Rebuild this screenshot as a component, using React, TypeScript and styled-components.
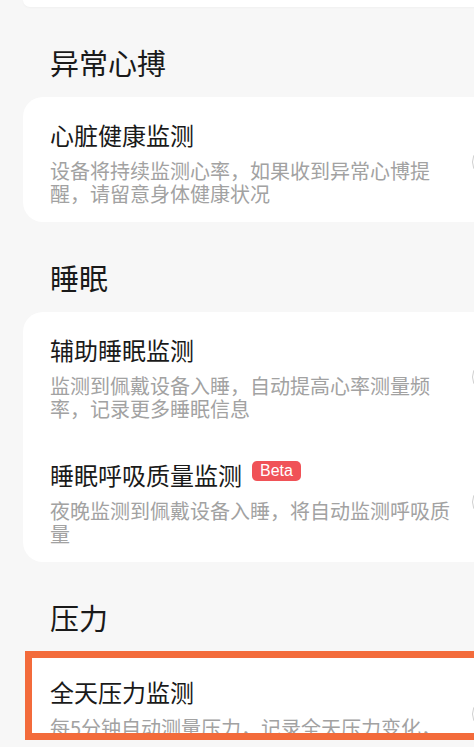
import React from "react";
import styled, { createGlobalStyle } from "styled-components";

const GlobalStyle = createGlobalStyle`
  html, body {
    margin: 0;
    padding: 0;
    background: #f7f7f7;
  }
  body {
    font-family: "Noto Sans CJK SC", "Noto Sans", sans-serif;
    color: #1c1c1c;
  }
`;

const Page = styled.div`
  width: 100%;
  min-height: 100vh;
  overflow: hidden;
`;

const CARD_WIDTH = 528;

const CardTail = styled.div`
  width: ${CARD_WIDTH}px;
  height: 7px;
  margin-left: 23px;
  background: #ffffff;
  border-radius: 0 0 20px 20px;
  box-shadow: 0 1px 2px rgba(0, 0, 0, 0.03);
`;

const SectionTitle = styled.h2`
  margin: 0;
  padding: 34.5px 0 15.5px 50px;
  font-size: 29px;
  line-height: 40px;
  font-weight: 400;
  color: #1a1a1a;
`;

const Card = styled.div`
  width: ${CARD_WIDTH}px;
  margin-left: 23px;
  background: #ffffff;
  border-radius: 20px;
  display: flex;
  flex-direction: column;
`;

const HighlightCard = styled.div`
  box-sizing: border-box;
  width: ${CARD_WIDTH}px;
  height: 89px;
  margin-left: 25px;
  margin-top: -1px;
  border: 7px solid #f36b3b;
  background: #ffffff;
  overflow: hidden;
`;

const Row = styled.div<{ $inset?: boolean }>`
  display: flex;
  align-items: ${(p) => (p.$inset ? "flex-start" : "center")};
  gap: 17px;
  padding: ${(p) => (p.$inset ? "18px 0 0 18px" : "22px 0 17px 27px")};
  min-height: ${(p) => (p.$inset ? "0" : "125px")};
  box-sizing: border-box;
`;

const TextBlock = styled.div`
  width: 405px;
  flex-shrink: 0;
`;

const TitleLine = styled.div`
  display: flex;
  align-items: center;
  gap: 10px;
`;

const ItemTitle = styled.div`
  font-size: 24px;
  line-height: 32px;
  color: #1a1a1a;
`;

const Badge = styled.span`
  display: inline-flex;
  align-items: center;
  height: 20px;
  padding: 0 8px;
  margin-bottom: 8px;
  border-radius: 5px;
  background: #f05257;
  color: #ffffff;
  font-family: "Liberation Sans", Arial, sans-serif;
  font-size: 16px;
`;

const Desc = styled.div`
  margin-top: 8px;
  font-size: 20px;
  line-height: 23px;
  color: #a2a2a2;
`;

const Switch = styled.div<{ $inset?: boolean }>`
  flex-shrink: 0;
  width: 52px;
  height: 32px;
  margin-top: ${(p) => (p.$inset ? "22px" : "0")};
  box-sizing: border-box;
  border: 1.5px solid #cfcfcf;
  border-radius: 16px;
  background: #ffffff;
`;

type Item = { title: string; desc: string; beta?: boolean };

const SettingRow: React.FC<{ item: Item; inset?: boolean }> = ({ item, inset }) => (
  <Row $inset={inset}>
    <TextBlock>
      <TitleLine>
        <ItemTitle>{item.title}</ItemTitle>
        {item.beta && <Badge>Beta</Badge>}
      </TitleLine>
      <Desc>{item.desc}</Desc>
    </TextBlock>
    <Switch $inset={inset} />
  </Row>
);

const heart: Item[] = [
  {
    title: "心脏健康监测",
    desc: "设备将持续监测心率，如果收到异常心博提醒，请留意身体健康状况",
  },
];

const sleep: Item[] = [
  {
    title: "辅助睡眠监测",
    desc: "监测到佩戴设备入睡，自动提高心率测量频率，记录更多睡眠信息",
  },
  {
    title: "睡眠呼吸质量监测",
    desc: "夜晚监测到佩戴设备入睡，将自动监测呼吸质量",
    beta: true,
  },
];

const stress: Item = {
  title: "全天压力监测",
  desc: "每5分钟自动测量压力，记录全天压力变化，",
};

const App: React.FC = () => (
  <Page>
    <GlobalStyle />
    <CardTail />

    <SectionTitle>异常心搏</SectionTitle>
    <Card>
      {heart.map((it) => (
        <SettingRow key={it.title} item={it} />
      ))}
    </Card>

    <SectionTitle>睡眠</SectionTitle>
    <Card>
      {sleep.map((it) => (
        <SettingRow key={it.title} item={it} />
      ))}
    </Card>

    <SectionTitle>压力</SectionTitle>
    <HighlightCard>
      <SettingRow item={stress} inset />
    </HighlightCard>
  </Page>
);

export default App;
